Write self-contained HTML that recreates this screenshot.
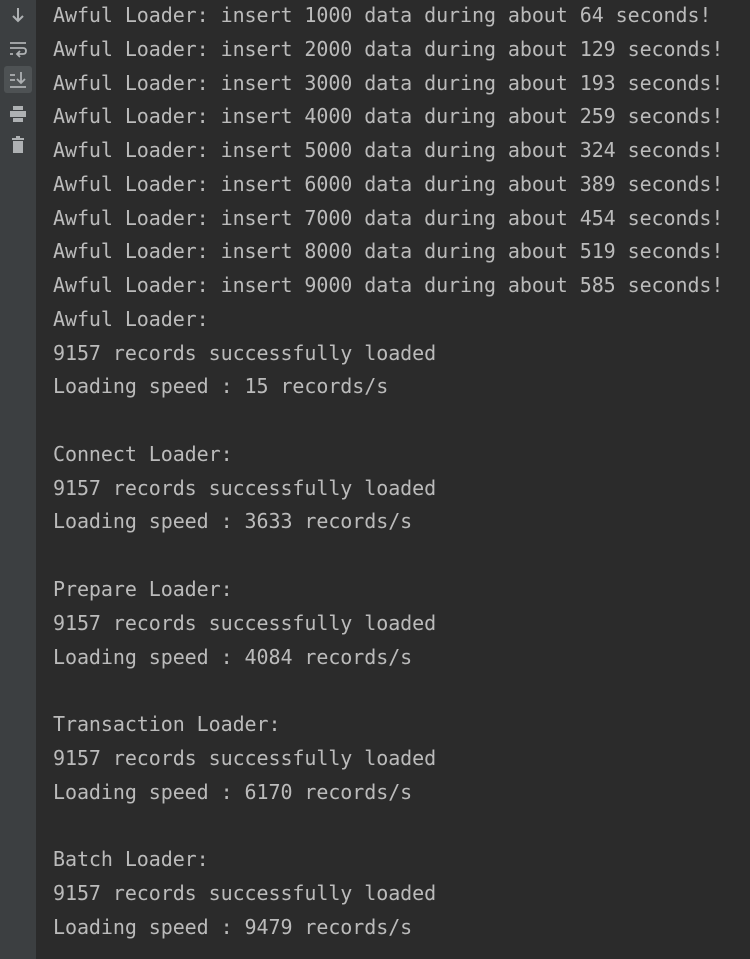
<!DOCTYPE html>
<html><head><style>
html,body{margin:0;padding:0;width:750px;height:959px;overflow:hidden;background:#2b2b2b}
.g{position:absolute;left:0;top:0;width:36px;height:959px;background:#3c3f41}
.t{position:absolute;left:53px;top:-1px;font-family:"DejaVu Sans Mono","Liberation Mono",monospace;font-size:20px;letter-spacing:-0.07px;line-height:33.77px;color:#bbbbbb;white-space:pre}
svg{position:absolute}
</style></head><body>
<div class="g"></div>
<div style="position:absolute;left:4px;top:66px;width:28px;height:27px;background:#4e5254;border-radius:3px"></div>
<svg style="left:9px;top:6px" width="18" height="18" viewBox="0 0 18 18"><path d="M9 2V15M4 10L9 15L14 10" stroke="#aeb1b3" stroke-width="2" fill="none"/></svg>
<svg style="left:9px;top:40px" width="18" height="18" viewBox="0 0 18 18"><path d="M1 3H17M1 8H14Q17 8 17 11Q17 14 14 14H9M11 11L8 14L11 17M1 14H4" stroke="#aeb1b3" stroke-width="1.8" fill="none"/></svg>
<svg style="left:9px;top:71px" width="18" height="18" viewBox="0 0 18 18"><path d="M1 4H6M1 9H6M1 16H17M12 1V12M8 8L12 12L16 8" stroke="#aeb1b3" stroke-width="1.8" fill="none"/></svg>
<svg style="left:9px;top:105px" width="18" height="18" viewBox="0 0 18 18"><rect x="4" y="1" width="10" height="4" fill="#aeb1b3"/><rect x="1" y="6" width="16" height="6" fill="#aeb1b3"/><rect x="4" y="13" width="10" height="4" fill="#aeb1b3"/></svg>
<svg style="left:9px;top:136px" width="18" height="18" viewBox="0 0 18 18"><rect x="3" y="2" width="12" height="2" fill="#aeb1b3"/><rect x="7" y="0" width="4" height="2" fill="#aeb1b3"/><rect x="4" y="5" width="10" height="12" fill="#aeb1b3"/></svg>
<div class="t">Awful Loader: insert 1000 data during about 64 seconds!
Awful Loader: insert 2000 data during about 129 seconds!
Awful Loader: insert 3000 data during about 193 seconds!
Awful Loader: insert 4000 data during about 259 seconds!
Awful Loader: insert 5000 data during about 324 seconds!
Awful Loader: insert 6000 data during about 389 seconds!
Awful Loader: insert 7000 data during about 454 seconds!
Awful Loader: insert 8000 data during about 519 seconds!
Awful Loader: insert 9000 data during about 585 seconds!
Awful Loader:
9157 records successfully loaded
Loading speed : 15 records/s

Connect Loader:
9157 records successfully loaded
Loading speed : 3633 records/s

Prepare Loader:
9157 records successfully loaded
Loading speed : 4084 records/s

Transaction Loader:
9157 records successfully loaded
Loading speed : 6170 records/s

Batch Loader:
9157 records successfully loaded
Loading speed : 9479 records/s</div>
</body></html>
